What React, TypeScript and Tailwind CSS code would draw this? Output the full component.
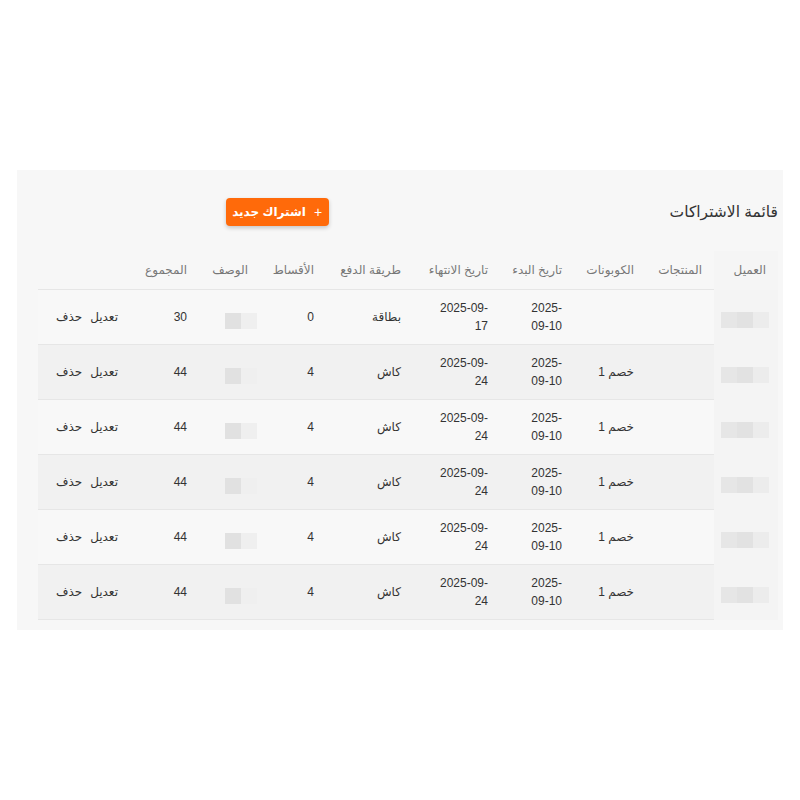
import React from "react";

type Row = {
  coupon: string;
  start: [string, string];
  end: [string, string];
  pay: string;
  inst: string;
  total: string;
};

const rows: Row[] = [
  { coupon: "", start: ["2025-", "09-10"], end: ["2025-09-", "17"], pay: "بطاقة", inst: "0", total: "30" },
  { coupon: "خصم 1", start: ["2025-", "09-10"], end: ["2025-09-", "24"], pay: "كاش", inst: "4", total: "44" },
  { coupon: "خصم 1", start: ["2025-", "09-10"], end: ["2025-09-", "24"], pay: "كاش", inst: "4", total: "44" },
  { coupon: "خصم 1", start: ["2025-", "09-10"], end: ["2025-09-", "24"], pay: "كاش", inst: "4", total: "44" },
  { coupon: "خصم 1", start: ["2025-", "09-10"], end: ["2025-09-", "24"], pay: "كاش", inst: "4", total: "44" },
  { coupon: "خصم 1", start: ["2025-", "09-10"], end: ["2025-09-", "24"], pay: "كاش", inst: "4", total: "44" },
];

const headers = [
  "العميل",
  "المنتجات",
  "الكوبونات",
  "تاريخ البدء",
  "تاريخ الانتهاء",
  "طريقة الدفع",
  "الأقساط",
  "الوصف",
  "المجموع",
  "",
];

export default function App() {
  return (
    <div
      dir="rtl"
      className="min-h-screen bg-white flex items-center px-[17px]"
      style={{ fontFamily: '"Liberation Sans", "DejaVu Sans", sans-serif' }}
    >
      <div className="w-full bg-[#f7f7f7] pt-[28px] pb-[10px] pr-[5px] pl-[20px]">
        <div className="flex items-center h-[28px]">
          <h2 className="text-[15.5px] text-[#333] font-normal leading-none">قائمة الاشتراكات</h2>
          <button className="mr-[341px] w-[103px] h-[28px] rounded-[4px] bg-[#ff6a0a] text-white text-[12px] font-bold flex items-center justify-center gap-[8px] shadow-[0_2px_4px_rgba(0,0,0,0.2)]">
            <span className="text-[14px] font-normal leading-none">+</span>
            <span>اشتراك جديد</span>
          </button>
        </div>
        <table className="mt-[25px] w-[740px] table-fixed border-collapse text-[12px] text-[#333]">
          <colgroup>
            <col className="w-[64px]" />
            <col className="w-[68px]" />
            <col className="w-[72px]" />
            <col className="w-[74px]" />
            <col className="w-[87px]" />
            <col className="w-[87px]" />
            <col className="w-[66px]" />
            <col className="w-[61px]" />
            <col className="w-[69px]" />
            <col className="w-[92px]" />
          </colgroup>
          <thead>
            <tr className="h-[39px]">
              {headers.map((h, i) => (
                <th
                  key={i}
                  className={
                    "px-[12px] text-right font-normal text-[#777] " +
                    (i === 0 ? "bg-[#f5f5f5]" : "border-b border-[#e6e6e6]")
                  }
                >
                  {h}
                </th>
              ))}
            </tr>
          </thead>
          <tbody>
            {rows.map((r, i) => {
              const bg = i % 2 === 0 ? "bg-[#f8f8f8]" : "bg-[#f1f1f1]";
              const cell = "px-[12px] text-right border-b border-[#e6e6e6] " + bg;
              return (
                <tr key={i} className="h-[55px]">
                  <td className="bg-[#f4f4f4] pr-[9px]">
                    <div className="flex mt-[6px]">
                      <div className="w-[16px] h-[16px] bg-[#ececec]" />
                      <div className="w-[16px] h-[16px] bg-[#e2e2e2]" />
                      <div className="w-[16px] h-[16px] bg-[#e6e6e6]" />
                    </div>
                  </td>
                  <td className={cell}></td>
                  <td className={cell}>{r.coupon}</td>
                  <td className={cell + " leading-[18px]"}>
                    <div dir="ltr" className="text-right">{r.start[0]}</div>
                    <div dir="ltr" className="text-right">{r.start[1]}</div>
                  </td>
                  <td className={cell + " leading-[18px]"}>
                    <div dir="ltr" className="text-right">{r.end[0]}</div>
                    <div dir="ltr" className="text-right">{r.end[1]}</div>
                  </td>
                  <td className={cell}>{r.pay}</td>
                  <td className={cell}>{r.inst}</td>
                  <td className={cell + " pr-[3px]"}>
                    <div className="flex mt-[8px]">
                      <div className="w-[16px] h-[16px] bg-[#efefef]" />
                      <div className="w-[16px] h-[16px] bg-[#e1e1e1]" />
                    </div>
                  </td>
                  <td className={cell}>{r.total}</td>
                  <td className={cell}>
                    <div className="flex gap-[8px]">
                      <span>تعديل</span>
                      <span>حذف</span>
                    </div>
                  </td>
                </tr>
              );
            })}
          </tbody>
        </table>
      </div>
    </div>
  );
}
